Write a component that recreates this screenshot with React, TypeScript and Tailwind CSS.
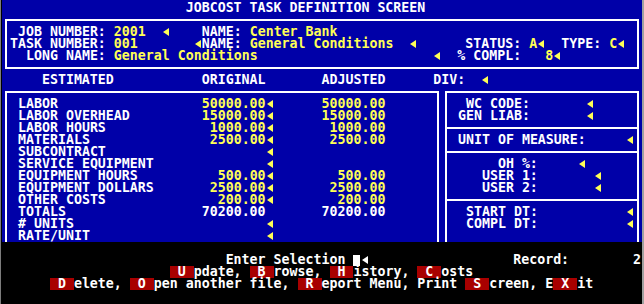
import { ReactNode } from 'react'

// text-mode screen: every cell is 8x12, columns are counted from the left edge of the screen
const W = 'text-white'
const Y = 'text-[#ffff55]'
const R = 'inline-block h-[12px] align-top bg-[#a80000] text-white'
const CUR = 'inline-block h-[11px] w-[7px] mt-px mr-px align-top bg-white'

type Item = [number, string, string]

const Arrow = () => (
  <svg width="8" height="12" viewBox="0 0 8 12" className="inline-block align-top">
    <polygon points="1,6 7,2 7,10" fill="currentColor" />
  </svg>
)

const renderText = (text: string) =>
  text.split(/(◄)/).map((part, i) => (part === '◄' ? <Arrow key={i} /> : part))

const Line = ({ base = 0, items = [] }: { base?: number; items?: Item[] }) => {
  let cur = base
  const out: ReactNode[] = []
  items.forEach(([col, text, cls], i) => {
    if (col > cur) out.push(' '.repeat(col - cur))
    out.push(
      <span key={i} className={cls}>
        {renderText(text)}
      </span>
    )
    cur = col + text.length
  })
  return <div className="h-[12px] whitespace-pre">{out}</div>
}

const costRows: [string, string][] = [
  ['LABOR', '50000.00'],
  ['LABOR OVERHEAD', '15000.00'],
  ['LABOR HOURS', '1000.00'],
  ['MATERIALS', '2500.00'],
  ['SUBCONTRACT', ''],
  ['SERVICE EQUIPMENT', ''],
  ['EQUIPMENT HOURS', '500.00'],
  ['EQUIPMENT DOLLARS', '2500.00'],
  ['OTHER COSTS', '200.00'],
  ['TOTALS', '70200.00'],
  ['# UNITS', ''],
  ['RATE/UNIT', ''],
]

const costItems = (label: string, value: string): Item[] => {
  const items: Item[] = [[2, label, W]]
  const total = label === 'TOTALS'
  if (value) items.push([33 - value.length, value, total ? W : Y])
  if (!total) items.push([33, '◄', Y])
  if (value) items.push([48 - value.length, value, total ? W : Y])
  return items
}

const sideSections: Item[][][] = [
  [
    [
      [58, 'WC CODE:', W],
      [73, '◄', Y],
    ],
    [
      [57, 'GEN LIAB:', W],
      [73, '◄', Y],
    ],
  ],
  [
    [
      [57, 'UNIT OF MEASURE:', W],
      [78, '◄', Y],
    ],
  ],
  [
    [
      [62, 'OH %:', W],
      [72, '◄', Y],
    ],
    [
      [60, 'USER 1:', W],
      [74, '◄', Y],
    ],
    [
      [60, 'USER 2:', W],
      [74, '◄', Y],
    ],
  ],
  [
    [
      [58, 'START DT:', W],
      [78, '◄', Y],
    ],
    [
      [58, 'COMPL DT:', W],
      [78, '◄', Y],
    ],
  ],
]

const App = () => {
  return (
    <div className="flex h-[304px] w-[644px] border-l border-r-2 border-l-[#7c7c7c] border-r-[#a0a0a0] bg-black pl-px font-['DejaVu_Sans_Mono',monospace] text-[13.288px] font-bold leading-[12px] text-white">
      <div className="flex w-[640px] flex-col">
        <div className="flex h-[242px] flex-col bg-[#0000a8] pt-[2px]">
          <Line items={[[23, 'JOBCOST TASK DEFINITION SCREEN', W]]} />

          <div className="mx-[3px] mt-[5px] border-2 border-white py-[5px] pl-[3px]">
            <Line
              base={1}
              items={[
                [2, 'JOB NUMBER:', W],
                [14, '2001', Y],
                [20, '◄', Y],
                [25, 'NAME:', W],
                [31, 'Center Bank', Y],
              ]}
            />
            <Line
              base={1}
              items={[
                [1, 'TASK NUMBER:', W],
                [14, '001', Y],
                [24, '◄', Y],
                [25, 'NAME:', W],
                [31, 'General Conditions', Y],
                [51, '◄', Y],
                [58, 'STATUS:', W],
                [66, 'A◄', Y],
                [70, 'TYPE:', W],
                [76, 'C◄', Y],
              ]}
            />
            <Line
              base={1}
              items={[
                [3, 'LONG NAME:', W],
                [14, 'General Conditions', Y],
                [54, '◄', Y],
                [57, '% COMPL:', W],
                [68, '8◄', Y],
              ]}
            />
          </div>

          <div className="mt-[5px]">
            <Line
              items={[
                [5, 'ESTIMATED', W],
                [25, 'ORIGINAL', W],
                [40, 'ADJUSTED', W],
                [54, 'DIV:', W],
                [60, '◄', Y],
              ]}
            />
          </div>

          <div className="mx-[3px] mt-[5px] flex flex-1 gap-[6px]">
            <div className="w-[434px] border-x-2 border-t-2 border-white pt-[5px] pl-[3px]">
              {costRows.map(([label, value]) => (
                <Line key={label} base={1} items={costItems(label, value)} />
              ))}
            </div>
            <div className="flex w-[194px] flex-col border-x-2 border-t-2 border-white">
              {sideSections.map((rows, i) => (
                <div
                  key={i}
                  className={i < sideSections.length - 1 ? 'border-b-2 border-white py-[5px] pl-[3px]' : 'flex-1 pt-[5px] pl-[3px]'}
                >
                  {rows.map((items, j) => (
                    <Line key={j} base={56} items={items} />
                  ))}
                </div>
              ))}
            </div>
          </div>
        </div>

        <div className="h-[62px] pt-[12px]">
          <Line
            items={[
              [28, 'Enter Selection', W],
              [44, '\u00a0', CUR],
              [45, '◄', W],
              [64, 'Record:', W],
              [79, '2', W],
            ]}
          />
          <Line
            items={[
              [21, ' U ', R],
              [24, 'pdate,', W],
              [31, ' B ', R],
              [34, 'rowse,', W],
              [41, ' H ', R],
              [44, 'istory,', W],
              [52, ' C ', R],
              [55, 'osts', W],
            ]}
          />
          <Line
            items={[
              [6, ' D ', R],
              [9, 'elete,', W],
              [16, ' O ', R],
              [19, 'pen another file,', W],
              [37, ' R ', R],
              [40, 'eport Menu, Print', W],
              [58, ' S ', R],
              [61, 'creen, E', W],
              [69, ' X ', R],
              [72, 'it', W],
            ]}
          />
        </div>
      </div>
    </div>
  )
}

export default App
